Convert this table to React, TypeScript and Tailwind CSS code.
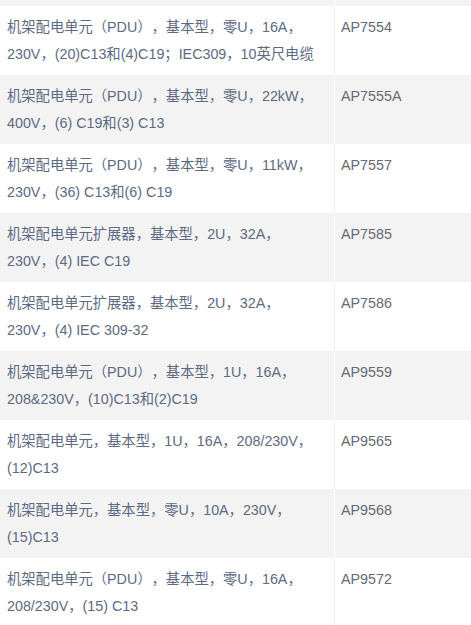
import React from "react";

const rows: [string, string, string][] = [
  ["机架配电单元（PDU），基本型，零U，16A，", "230V，(20)C13和(4)C19；IEC309，10英尺电缆", "AP7554"],
  ["机架配电单元（PDU），基本型，零U，22kW，", "400V，(6) C19和(3) C13", "AP7555A"],
  ["机架配电单元（PDU），基本型，零U，11kW，", "230V，(36) C13和(6) C19", "AP7557"],
  ["机架配电单元扩展器，基本型，2U，32A，", "230V，(4) IEC C19", "AP7585"],
  ["机架配电单元扩展器，基本型，2U，32A，", "230V，(4) IEC 309-32", "AP7586"],
  ["机架配电单元（PDU），基本型，1U，16A，", "208&230V，(10)C13和(2)C19", "AP9559"],
  ["机架配电单元，基本型，1U，16A，208/230V，", "(12)C13", "AP9565"],
  ["机架配电单元，基本型，零U，10A，230V，", "(15)C13", "AP9568"],
  ["机架配电单元（PDU），基本型，零U，16A，", "208/230V，(15) C13", "AP9572"],
];

export default function App() {
  return (
    <div
      className="w-[471px] h-[625px] overflow-hidden bg-white text-[14.3px] leading-[27px] [text-spacing-trim:space-all]"
      style={{ fontFamily: '"Liberation Sans", Arial, "Noto Sans CJK SC", sans-serif' }}
    >
      <div className="flex h-[6px] bg-[#f3f3f3]">
        <div className="w-[335px] border-r border-white" />
        <div className="flex-1" />
      </div>
      {rows.map(([a, b, code], i) => {
        const gray = i % 2 === 1;
        return (
          <div
            key={code}
            className={`flex h-[69px] ${gray ? "bg-[#f3f3f3]" : "bg-white"}`}
          >
            <div
              className={`w-[335px] shrink-0 border-r pl-[7px] pt-2 whitespace-nowrap text-[#5d6a84] ${
                gray ? "border-white" : "border-[#f0f0f0]"
              }`}
            >
              <div>{a}</div>
              <div>{b}</div>
            </div>
            <div className="flex-1 pl-[6px] pt-2 text-[#666a73]">{code}</div>
          </div>
        );
      })}
    </div>
  );
}
